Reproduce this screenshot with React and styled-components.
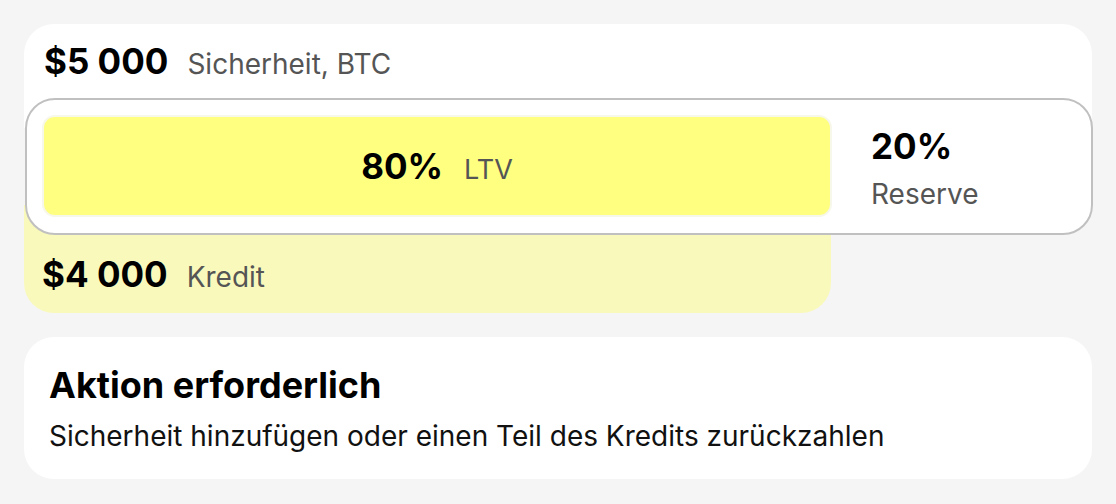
import React from "react";
import styled, { createGlobalStyle } from "styled-components";

const GlobalStyle = createGlobalStyle`
  html, body {
    margin: 0;
    padding: 0;
    background: #f5f5f5;
  }
  body {
    font-family: Inter, "Noto Sans", "Liberation Sans", sans-serif;
    color: #000;
    -webkit-font-smoothing: antialiased;
  }
`;

const Page = styled.div`
  box-sizing: border-box;
  width: 1116px;
  height: 504px;
  padding: 24px 24px 0 24px;
  display: flex;
  flex-direction: column;
  gap: 24px;
`;

const LoanCard = styled.section`
  display: flex;
  flex-direction: column;
`;

const Header = styled.div`
  display: flex;
  align-items: center;
  height: 74px;
  padding: 0 20px 30px;
  margin-bottom: -30px;
  background: #fff;
  border-radius: 30px 30px 0 0;
`;

const Figure = styled.div`
  display: flex;
  align-items: baseline;
  gap: ${(p) => p.$gap || 19}px;
`;

const Value = styled.span`
  font-size: 35px;
  font-weight: 700;
  line-height: 1.15;
`;

const Caption = styled.span`
  font-size: ${(p) => p.$size || 28}px;
  font-weight: 400;
  color: #555;
  line-height: 1.2;
`;

const Meter = styled.div`
  position: relative;
  z-index: 1;
  display: flex;
  align-items: stretch;
  height: 102px;
  padding: 15px 15px 16px;
  margin-left: 1px;
  margin-right: -1px;
  background: #fff;
  border: 2px solid #c0c0c0;
  border-radius: 30px;
`;

const Bar = styled.div`
  flex: 1;
  display: flex;
  align-items: center;
  justify-content: center;
  background: #ffff80;
  border: 2px solid #f7f7ea;
  border-radius: 13px;
`;

const Reserve = styled.div`
  width: 205px;
  padding: 6px 0 0 39px;
  display: flex;
  flex-direction: column;
  justify-content: center;
  gap: 12px;
`;

const Credit = styled.div`
  display: flex;
  align-items: center;
  width: calc(100% - 261px);
  box-sizing: border-box;
  height: 108px;
  padding: 30px 18px 0;
  margin-top: -30px;
  background: #f9f9bc;
  border-radius: 0 0 30px 30px;
`;

const Notice = styled.section`
  height: 142px;
  box-sizing: border-box;
  padding: 27px 25px 0;
  background: #fff;
  border-radius: 30px;
`;

const NoticeTitle = styled.h2`
  margin: 0;
  font-size: 36px;
  font-weight: 700;
  line-height: 42px;
`;

const NoticeText = styled.p`
  margin: 13px 0 0;
  font-size: 28px;
  font-weight: 400;
  line-height: 34px;
  color: #111;
`;

const loan = {
  collateral: "$5 000",
  asset: "BTC",
  credit: "$4 000",
  ltv: 80,
};

export default function App() {
  return (
    <>
      <GlobalStyle />
      <Page>
        <LoanCard>
          <Header>
            <Figure>
              <Value>{loan.collateral}</Value>
              <Caption>Sicherheit, {loan.asset}</Caption>
            </Figure>
          </Header>
          <Meter>
            <Bar>
              <Figure $gap={21}>
                <Value>{loan.ltv}%</Value>
                <Caption $size={27}>LTV</Caption>
              </Figure>
            </Bar>
            <Reserve>
              <Value>{100 - loan.ltv}%</Value>
              <Caption>Reserve</Caption>
            </Reserve>
          </Meter>
          <Credit>
            <Figure>
              <Value>{loan.credit}</Value>
              <Caption>Kredit</Caption>
            </Figure>
          </Credit>
        </LoanCard>
        <Notice>
          <NoticeTitle>Aktion erforderlich</NoticeTitle>
          <NoticeText>
            Sicherheit hinzufügen oder einen Teil des Kredits zurückzahlen
          </NoticeText>
        </Notice>
      </Page>
    </>
  );
}
